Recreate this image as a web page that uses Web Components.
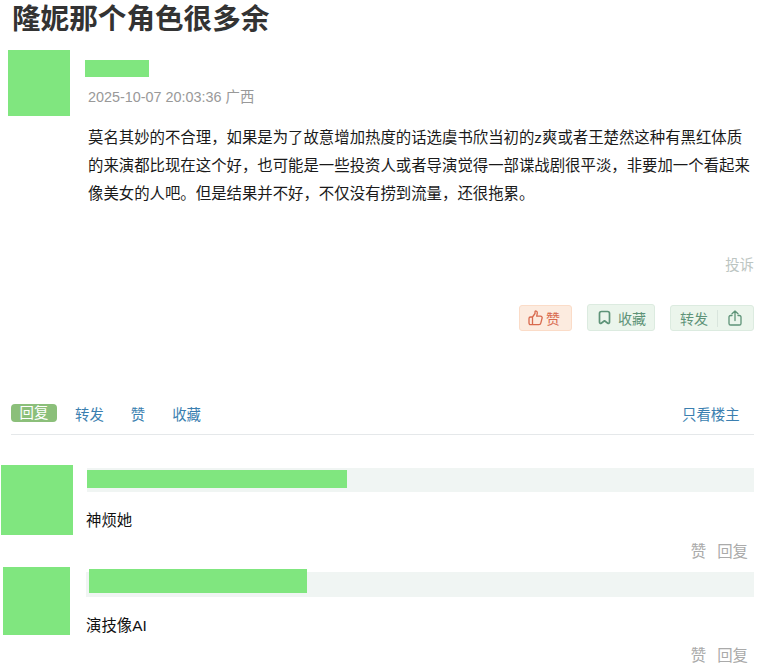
<!DOCTYPE html>
<html lang="zh"><head><meta charset="utf-8"><title>隆妮那个角色很多余</title>
<style>
html,body{margin:0;padding:0;background:#fff}
body{font-family:"Liberation Sans","Noto Sans CJK SC",sans-serif;width:775px;height:668px;overflow:hidden}
</style></head><body>
<thread-page></thread-page>
<template id="tp">
<style>
:host{display:block;font-size:14.4px;color:#000}
h1{margin:0;padding:0 0 0 12px;font-size:28.6px;line-height:38px;height:50px;font-weight:700;color:#333;box-sizing:border-box}
.tabs{display:flex;align-items:center;margin:66px 21px 0 11px;height:38px;border-bottom:1px solid #e5e8ea;font-size:14.4px;color:#3b7fb0;padding-bottom:5px;box-sizing:border-box}
.tabs span{margin-right:27px}
.tabs .on{background:#8bbf7a;color:#fff;border-radius:4px;padding:0 8.6px;line-height:18px;margin-right:18px}
.tabs .end{margin:0 14.4px 0 auto}
</style>
<h1>隆妮那个角色很多余</h1>
<post-main></post-main>
<nav class="tabs"><span class="on">回复</span><span>转发</span><span>赞</span><span>收藏</span><span class="end">只看楼主</span></nav>
<reply-item av="72,70" avx="1" avtop="30" barx="87" bary="3" barh="24" gx="0" gy="2" gw="260" gh="18" texty="19" tx="-1" footy="12"><span>神烦她</span></reply-item>
<reply-item av="67,68" avx="3" avtop="6" barx="86" bary="5" barh="25" gx="3" gy="-3" gw="218" gh="24" texty="19" tx="0" footy="11"><span>演技像AI</span></reply-item>
</template>
<template id="tm">
<style>
:host{display:block}
.head{display:flex;align-items:flex-start;padding-left:8px}
.av{width:62px;height:66px;background:#80e67f;flex:none}
.meta{margin-left:15px}
.name{width:64px;height:17px;background:#80e67f;margin-top:10px}
.date{margin:12px 0 0 3px;color:#999;font-size:14.4px;line-height:16px}
.text{margin:8px 21px 0 88px;font-size:15.4px;line-height:28px;color:#1a1a1a}
.rep{text-align:right;margin:48px 21px 0 0;font-size:14.4px;line-height:18px;color:#bcc5c2}
.acts{display:flex;justify-content:flex-end;align-items:flex-end;margin:30px 21px 0 0}
</style>
<div class="head"><div class="av"></div><div class="meta"><div class="name"></div><div class="date">2025-10-07 20:03:36 广西</div></div></div>
<p class="text" style="margin-bottom:0">莫名其妙的不合理，如果是为了故意增加热度的话选虞书欣当初的z爽或者王楚然这种有黑红体质的来演都比现在这个好，也可能是一些投资人或者导演觉得一部谍战剧很平淡，非要加一个看起来像美女的人吧。但是结果并不好，不仅没有捞到流量，还很拖累。</p>
<div class="rep">投诉</div>
<div class="acts">
<act-btn kind="like" style="margin-right:15px"><svg slot="pre" width="15" height="16" viewBox="0 0 15 16" fill="none" stroke="currentColor" stroke-width="1.3" stroke-linejoin="round" stroke-linecap="round"><path d="M4.500 7 7 3.500V1.800C7 .6 9.300.7 9.300 2.800c0 1.300-.5 2.400-.6 3.400h3.800c1.200 0 1.900 1 1.600 2l-1.300 5c-.2.900-.9 1.400-1.800 1.400H2.500C1.600 14.600 1 14 1 13.100V8.500C1 7.600 1.600 7 2.500 7h2zM4.500 7v7.600"/></svg>赞</act-btn>
<act-btn kind="fav" style="margin-right:15px"><svg slot="pre" width="13" height="15" viewBox="0 0 13 15" fill="none" stroke="currentColor" stroke-width="1.700" stroke-linejoin="round"><path d="M1.500 3.500C1.500 2.300 2.300 1.500 3.500 1.500h6c1.200 0 2 .8 2 2V12.300c0 1-.9 1.400-1.700.9L6.500 10.800 3.200 13.200c-.8.500-1.700.1-1.700-.9z"/></svg>收藏</act-btn>
<act-btn kind="share">转发<svg slot="post" width="14" height="16" viewBox="0 0 14 16" fill="none" stroke="currentColor" stroke-width="1.300" stroke-linejoin="round" stroke-linecap="round"><path d="M4 5.500H2.600C1.600 5.500 1 6.100 1 7.100v6.300C1 14.400 1.600 15 2.600 15h8.800c1 0 1.600-.6 1.600-1.600V7.100C13 6.100 12.400 5.500 11.400 5.500H10M7 10.500V1M4 3.800 7 1l3 2.800"/></svg></act-btn>
</div>
</template>
<template id="ta">
<style>
:host{display:inline-flex;align-items:center;box-sizing:border-box;height:26px;border-radius:3px;font-size:14px;border:1px solid;padding:0 8px;white-space:nowrap}
:host([kind=like]){background:#fcebdf;border-color:#fbdcc8;color:#d8694d;width:53px;padding:0 0 0 8px}
:host([kind=fav]){background:#ebf5ec;border-color:#dcebe0;color:#5e9378;width:68px;height:27px;padding:0 0 0 10px}
:host([kind=share]){background:#ebf5ec;border-color:#dcebe0;color:#5e9378;width:84px;padding:0 0 0 9px}
::slotted(svg[slot=pre]){margin-right:3px}
:host([kind=fav]) ::slotted(svg[slot=pre]){margin-right:7px}
.sep{display:none}
:host([kind=share]) .sep{display:block;width:1px;height:17px;background:#d9e5dd;margin:0 10px 0 9px}
</style>
<slot name="pre"></slot><slot></slot><span class="sep"></span><slot name="post"></slot>
</template>
<template id="tr">
<style>
:host{display:block}
.row{display:flex;align-items:flex-start}
.av{background:#80e67f;flex:none}
.main{flex:1;min-width:0;margin-right:21px}
.bar{background:#f0f5f3;display:flow-root}
.g{background:#80e67f}
.txt{font-size:15.4px;line-height:20px;color:#111}
.foot{text-align:right;font-size:15.4px;line-height:18px;color:#aaa;padding-right:6px}
.foot span{margin-left:11px}
</style>
<div class="row"><div class="av"></div><div class="main"><div class="bar"><div class="g"></div></div><div class="txt"><slot></slot></div><div class="foot"><span>赞</span><span>回复</span></div></div></div>
</template>
<script>
function mount(el,id){const r=el.attachShadow({mode:'open'});r.appendChild(document.getElementById(id).content.cloneNode(true));return r}
class ThreadPage extends HTMLElement{constructor(){super();mount(this,'tp')}}
class PostMain extends HTMLElement{constructor(){super();mount(this,'tm')}}
class ActBtn extends HTMLElement{constructor(){super();mount(this,'ta')}}
class ReplyItem extends HTMLElement{constructor(){super();const r=mount(this,'tr');const g=n=>this.getAttribute(n);const [w,h]=g('av').split(',').map(Number);
const a=r.querySelector('.av');a.style.cssText=`width:${w}px;height:${h}px;margin-left:${g('avx')}px`;
const m=r.querySelector('.main');m.style.marginLeft=(g('barx')-w-g('avx'))+'px';
const b=r.querySelector('.bar');b.style.cssText=`margin-top:${g('bary')}px;height:${g('barh')}px;padding-top:${Math.max(0,g('gy'))}px;box-sizing:border-box`;
const q=r.querySelector('.g');q.style.cssText=`width:${g('gw')}px;height:${g('gh')}px;margin-left:${g('gx')}px;margin-top:${Math.min(0,g('gy'))}px`;
const t=r.querySelector('.txt');t.style.marginTop=g('texty')+'px';t.style.marginLeft=g('tx')+'px';
r.querySelector('.foot').style.marginTop=g('footy')+'px';
this.style.marginTop=g('avtop')+'px';}}
customElements.define('thread-page',ThreadPage);customElements.define('post-main',PostMain);customElements.define('act-btn',ActBtn);customElements.define('reply-item',ReplyItem);
</script>
</body></html>
